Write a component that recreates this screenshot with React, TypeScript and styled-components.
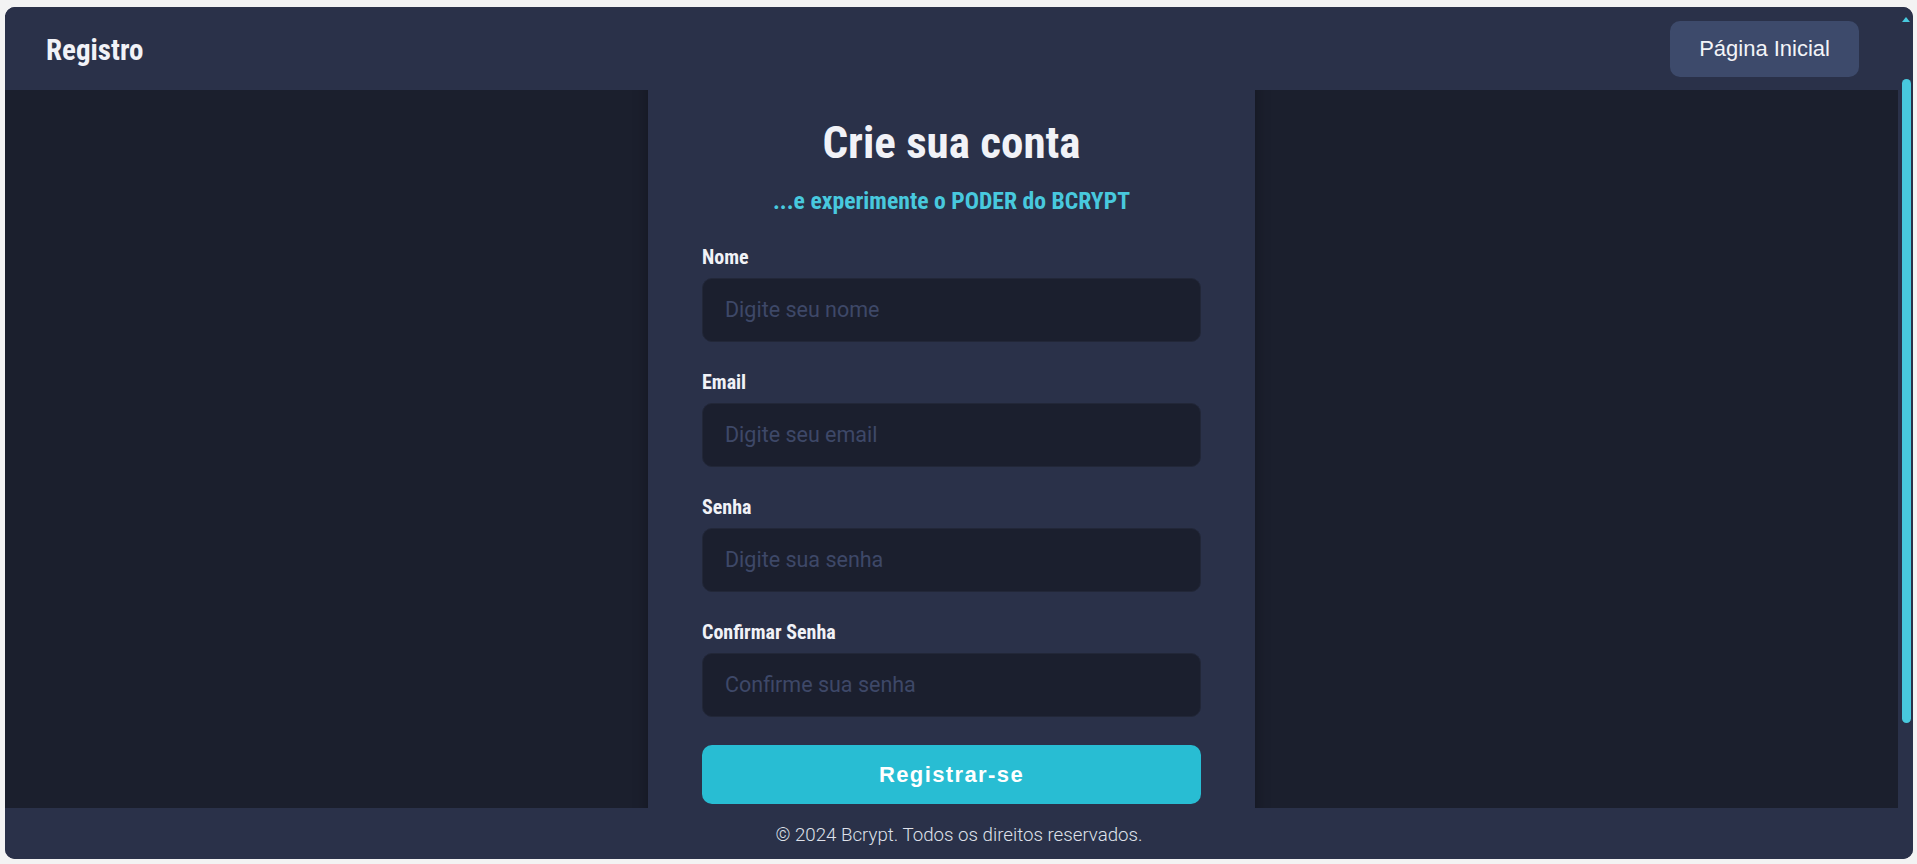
import React, { useLayoutEffect, useRef } from "react";
import styled, { createGlobalStyle } from "styled-components";

const CONDENSED = `"Roboto Condensed", "Liberation Sans Narrow", "Arial Narrow", "DejaVu Sans Condensed", sans-serif`;
const BODY = `Roboto, "Liberation Sans", Arial, sans-serif`;

const GlobalStyle = createGlobalStyle`
  html, body {
    margin: 0;
    padding: 0;
    height: 100%;
    overflow: hidden;
    background: #f3f3f3;
  }
  #root { height: 100%; }
  *, *::before, *::after { box-sizing: border-box; }
`;

const Frame = styled.div`
  margin: 7px 4px 0 5px;
  height: 852px;
  border-radius: 10px;
  overflow: hidden;
  background: #2a3149;
  display: flex;
  flex-direction: column;
`;

const Body = styled.div`
  flex: 1;
  min-height: 0;
  display: flex;
`;

const Viewport = styled.div`
  flex: 1;
  min-width: 0;
  overflow-x: hidden;
  overflow-y: auto;
  scrollbar-width: none;
  display: flex;
  flex-direction: column;
  &::-webkit-scrollbar {
    display: none;
  }
`;

const ScrollRail = styled.div`
  width: 15px;
  flex-shrink: 0;
  padding-left: 4px;
  display: flex;
  flex-direction: column;
  align-items: flex-start;
  background: #2a3149;
`;

const RailArrow = styled.span`
  margin-top: 10px;
  width: 0;
  height: 0;
  border-left: 4.5px solid transparent;
  border-right: 4.5px solid transparent;
  border-bottom: 5px solid #48c9de;
`;

const RailThumb = styled.span`
  margin-top: 57px;
  width: 9px;
  height: 644px;
  border-radius: 4.5px;
  background: #48c9de;
`;

const Header = styled.header`
  position: sticky;
  top: 0;
  z-index: 2;
  flex-shrink: 0;
  height: 83px;
  padding: 0 39px 0 41px;
  display: flex;
  align-items: center;
  justify-content: space-between;
  background: #2a3149;
`;

const Brand = styled.h1`
  margin: 4px 0 0;
  font-family: ${CONDENSED};
  font-stretch: condensed;
  font-weight: 700;
  font-size: 29px;
  line-height: 1.2;
  color: #f1f2f7;
`;

const HomeButton = styled.button`
  height: 56px;
  padding: 0 29px;
  border: none;
  border-radius: 10px;
  background: #3d4a6b;
  color: #f3f4f8;
  font-family: "Liberation Sans", Arial, sans-serif;
  font-size: 22px;
  cursor: pointer;
`;

const Main = styled.main`
  flex-shrink: 0;
  height: 953px;
  display: grid;
  grid-template-columns: 1fr 607px 1fr;
  background: #1b1f2d;
`;

const Panel = styled.section`
  grid-column: 2;
  padding: 101px 54px 0;
  background: #2a3149;
  box-shadow: 0 0 14px rgba(0, 0, 0, 0.3);
`;

const Title = styled.h2`
  margin: 0;
  font-family: ${CONDENSED};
  font-stretch: condensed;
  font-weight: 700;
  font-size: 45px;
  line-height: 1.2;
  text-align: center;
  color: #f1f2f7;
`;

const Tagline = styled.p`
  margin: 17px 0 0;
  font-family: ${CONDENSED};
  font-stretch: condensed;
  font-weight: 700;
  font-size: 23.7px;
  line-height: 1.2;
  text-align: center;
  color: #48c9de;
`;

const Form = styled.form`
  margin-top: 30px;
  display: flex;
  flex-direction: column;
  gap: 28.5px;
`;

const Field = styled.div`
  display: flex;
  flex-direction: column;
  gap: 8.5px;
`;

const Label = styled.label`
  font-family: ${CONDENSED};
  font-stretch: condensed;
  font-weight: 700;
  font-size: 20px;
  line-height: 24px;
  color: #f1f2f7;
`;

const Input = styled.input`
  height: 64px;
  width: 100%;
  padding: 0 22px;
  border: 1px solid #222738;
  border-radius: 10px;
  background: #1b1f2e;
  color: #f1f2f7;
  font-family: ${BODY};
  font-size: 21.5px;
  outline: none;
  &::placeholder {
    color: #3e4868;
  }
`;

const Submit = styled.button`
  height: 59px;
  width: 100%;
  border: none;
  border-radius: 10px;
  background: #28bdd3;
  color: #ffffff;
  font-family: "Liberation Sans", Arial, sans-serif;
  font-weight: 700;
  font-size: 22px;
  letter-spacing: 1.4px;
  cursor: pointer;
`;

const Footer = styled.footer`
  flex-shrink: 0;
  height: 51px;
  padding-top: 2px;
  display: flex;
  align-items: center;
  justify-content: center;
  background: #2a3149;
  font-family: ${BODY};
  font-weight: 300;
  font-size: 18.7px;
  color: #dfe1ea;
`;

const fields = [
  { id: "nome", label: "Nome", type: "text", placeholder: "Digite seu nome" },
  { id: "email", label: "Email", type: "email", placeholder: "Digite seu email" },
  { id: "senha", label: "Senha", type: "password", placeholder: "Digite sua senha" },
  { id: "confirmar", label: "Confirmar Senha", type: "password", placeholder: "Confirme sua senha" },
];

export default function App() {
  const viewportRef = useRef<HTMLDivElement>(null);

  useLayoutEffect(() => {
    if (viewportRef.current) viewportRef.current.scrollTop = 75;
  }, []);

  return (
    <>
      <GlobalStyle />
      <Frame>
        <Body>
          <Viewport ref={viewportRef}>
            <Header>
              <Brand>Registro</Brand>
              <HomeButton type="button">Página Inicial</HomeButton>
            </Header>
            <Main>
              <Panel>
                <Title>Crie sua conta</Title>
                <Tagline>...e experimente o PODER do BCRYPT</Tagline>
                <Form onSubmit={(e) => e.preventDefault()}>
                  {fields.map((f) => (
                    <Field key={f.id}>
                      <Label htmlFor={f.id}>{f.label}</Label>
                      <Input id={f.id} type={f.type} placeholder={f.placeholder} />
                    </Field>
                  ))}
                  <Submit type="submit">Registrar-se</Submit>
                </Form>
              </Panel>
            </Main>
          </Viewport>
          <ScrollRail aria-hidden="true">
            <RailArrow />
            <RailThumb />
          </ScrollRail>
        </Body>
        <Footer>© 2024 Bcrypt. Todos os direitos reservados.</Footer>
      </Frame>
    </>
  );
}
